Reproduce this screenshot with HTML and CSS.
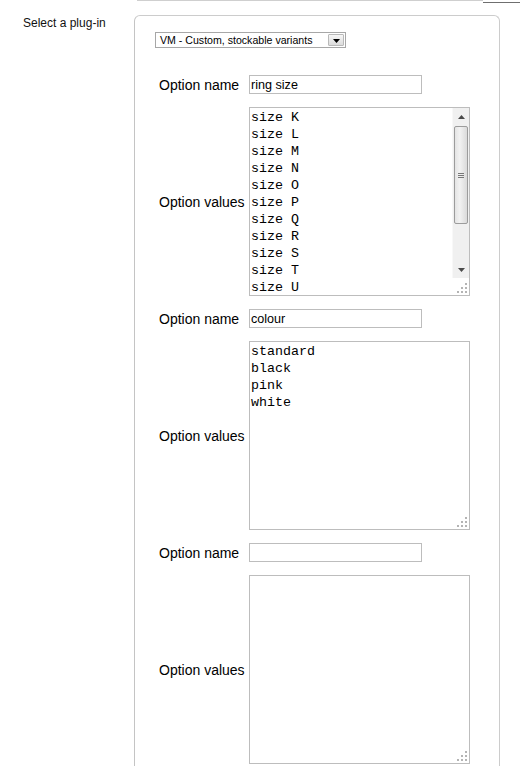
FILE: index.html
```html
<!DOCTYPE html>
<html>
<head>
<meta charset="utf-8">
<link rel="stylesheet" href="styles.css">
</head>
<body>
<div class="topline"><div class="seg-light"></div><div class="seg-dark"></div></div>
<div class="row">
  <div class="side-label">Select a plug-in</div>
  <div class="panel">
    <div class="select">
      <span class="select-text">VM - Custom, stockable variants</span>
      <span class="select-btn"><svg width="7" height="4" viewBox="0 0 7 4"><path d="M0 0H7L3.5 4Z" fill="#000"/></svg></span>
    </div>
    <div class="options">
      <label class="opt-label">Option name</label>
      <input class="opt-input" type="text" value="ring size">
      <label class="opt-label">Option values</label>
      <div class="ta-wrap">
        <textarea class="opt-ta">size K
size L
size M
size N
size O
size P
size Q
size R
size S
size T
size U
size V
size W
size X
size Y
size Z</textarea>
        <div class="scrollbar">
          <div class="sb-btn"><svg width="7" height="4" viewBox="0 0 7 4"><path d="M3.5 0L7 4H0Z" fill="#4a4a4a"/></svg></div>
          <div class="sb-track"><div class="sb-thumb"><span></span><span></span><span></span></div></div>
          <div class="sb-btn"><svg width="7" height="4" viewBox="0 0 7 4"><path d="M0 0H7L3.5 4Z" fill="#4a4a4a"/></svg></div>
        </div>
        <svg class="grip" width="10" height="10" viewBox="0 0 10 10"><g fill="#b4b4b4"><rect x="8" y="0" width="2" height="2"/><rect x="4" y="4" width="2" height="2"/><rect x="8" y="4" width="2" height="2"/><rect x="0" y="8" width="2" height="2"/><rect x="4" y="8" width="2" height="2"/><rect x="8" y="8" width="2" height="2"/></g></svg>
      </div>

      <label class="opt-label">Option name</label>
      <input class="opt-input" type="text" value="colour">
      <label class="opt-label">Option values</label>
      <div class="ta-wrap">
        <textarea class="opt-ta">standard
black
pink
white</textarea>
        <svg class="grip" width="10" height="10" viewBox="0 0 10 10"><g fill="#b4b4b4"><rect x="8" y="0" width="2" height="2"/><rect x="4" y="4" width="2" height="2"/><rect x="8" y="4" width="2" height="2"/><rect x="0" y="8" width="2" height="2"/><rect x="4" y="8" width="2" height="2"/><rect x="8" y="8" width="2" height="2"/></g></svg>
      </div>

      <label class="opt-label">Option name</label>
      <input class="opt-input" type="text" value="">
      <label class="opt-label">Option values</label>
      <div class="ta-wrap">
        <textarea class="opt-ta"></textarea>
        <svg class="grip" width="10" height="10" viewBox="0 0 10 10"><g fill="#b4b4b4"><rect x="8" y="0" width="2" height="2"/><rect x="4" y="4" width="2" height="2"/><rect x="8" y="4" width="2" height="2"/><rect x="0" y="8" width="2" height="2"/><rect x="4" y="8" width="2" height="2"/><rect x="8" y="8" width="2" height="2"/></g></svg>
      </div>
    </div>
  </div>
</div>
</body>
</html>
```

FILE: styles.css
```css
html, body {
  margin: 0;
  padding: 0;
  background: #fff;
  overflow: hidden;
}
body {
  font-family: "Liberation Sans", Arial, sans-serif;
  color: #000;
  height: 766px;
}
.topline {
  display: flex;
  height: 3px;
}
.seg-light {
  margin-left: 137px;
  width: 346px;
  border-top: 1px solid #cfcfcf;
}
.seg-dark {
  flex: 1;
  margin-top: 2px;
  border-top: 1px solid #6f6f6f;
}
.row {
  display: flex;
  margin-top: 12px;
}
.side-label {
  width: 134px;
  box-sizing: border-box;
  padding-left: 23px;
  padding-top: 1px;
  font-size: 12px;
  line-height: 15px;
  color: #111;
}
.panel {
  width: 366px;
  height: 760px;
  box-sizing: border-box;
  border: 1px solid #cccccc;
  border-left-color: #c4c4c4;
  border-bottom: none;
  border-radius: 6px 6px 0 0;
  padding: 16px 0 0 20px;
}
.select {
  width: 191px;
  height: 16px;
  box-sizing: border-box;
  border: 1px solid #a7a7a7;
  display: flex;
  align-items: center;
  justify-content: space-between;
  background: #fff;
}
.select-text {
  font-size: 10.6px;
  padding-left: 4px;
  line-height: 14px;
  color: #000;
}
.select-btn {
  width: 16px;
  height: 12px;
  box-sizing: border-box;
  margin-right: 1px;
  border: 1px solid #b9b9b9;
  border-radius: 1px;
  background: linear-gradient(#f6f6f6, #dcdcdc);
  display: flex;
  align-items: center;
  justify-content: center;
  padding-top: 1px;
}
.options {
  margin-top: 27px;
  margin-left: 4px;
  display: grid;
  grid-template-columns: 90px 221px;
  row-gap: 13px;
  align-items: center;
}
.opt-label {
  font-size: 14px;
  line-height: 16px;
  color: #000;
}
.opt-input {
  width: 173px;
  height: 19px;
  box-sizing: border-box;
  border: 1px solid #bdbdbd;
  padding: 0 1px;
  margin: 0;
  font-family: "Liberation Sans", Arial, sans-serif;
  font-size: 12.6px;
  color: #000;
  outline: none;
  background: #fff;
}
.ta-wrap {
  position: relative;
  width: 221px;
  height: 189px;
}
.opt-ta {
  display: block;
  width: 221px;
  height: 189px;
  box-sizing: border-box;
  margin: 0;
  border: 1px solid #bdbdbd;
  padding: 1px 1px;
  font-family: "Liberation Mono", "Courier New", monospace;
  font-size: 13.33px;
  line-height: 17px;
  color: #000;
  resize: none;
  overflow: hidden;
  outline: none;
  background: #fff;
}
.scrollbar {
  position: absolute;
  right: 1px;
  top: 1px;
  width: 17px;
  height: 170px;
  display: flex;
  flex-direction: column;
  background: #f0f0f0;
  border-left: 1px solid #f8f8f8;
  box-sizing: border-box;
}
.sb-btn {
  height: 17px;
  display: flex;
  align-items: center;
  justify-content: center;
}
.sb-track {
  flex: 1;
  padding-top: 1px;
}
.sb-thumb {
  margin: 0 1px;
  height: 98px;
  box-sizing: border-box;
  border: 1px solid #9c9c9c;
  border-radius: 2px;
  background: linear-gradient(90deg, #e4e4e4, #f2f2f2 40%, #dadada);
  display: flex;
  flex-direction: column;
  align-items: center;
  justify-content: center;
  gap: 1px;
}
.sb-thumb span {
  width: 6px;
  height: 1px;
  background: #777;
}
.grip {
  position: absolute;
  right: 3px;
  bottom: 3px;
}
```
